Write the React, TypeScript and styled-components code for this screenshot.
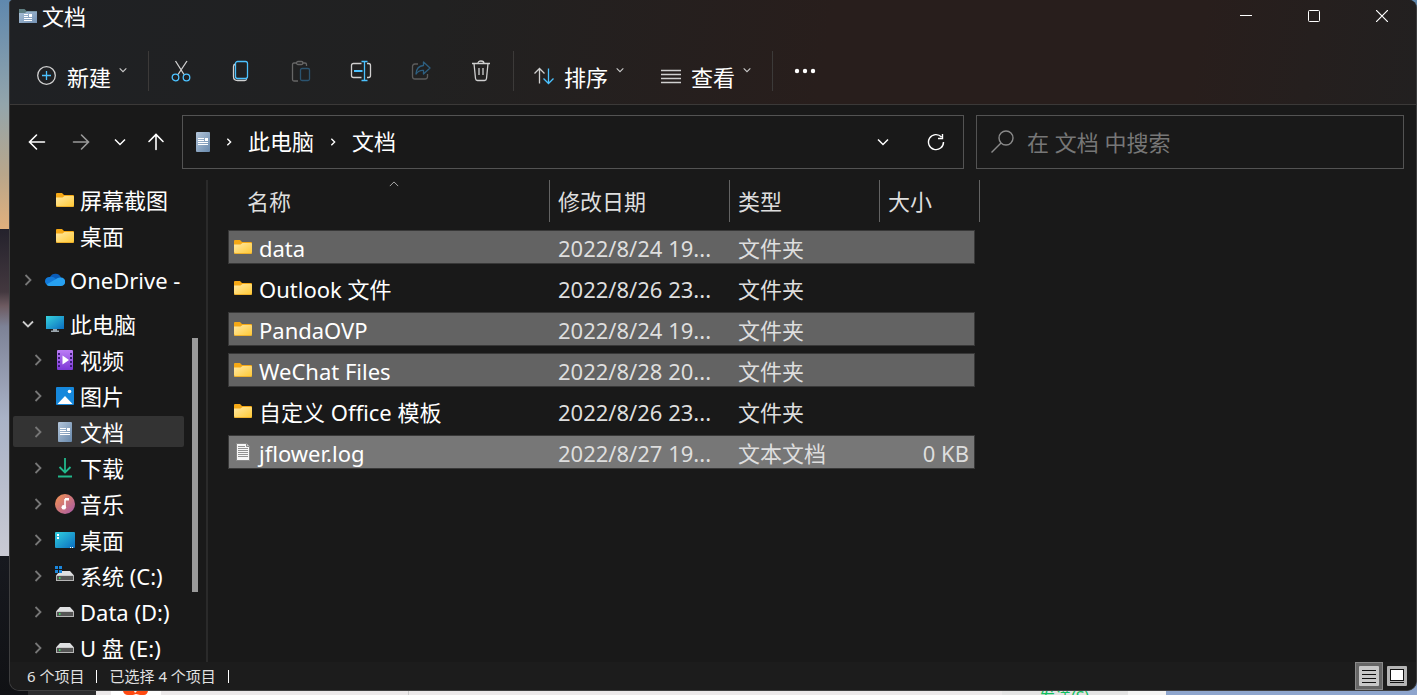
import React from "react";
import styled, { createGlobalStyle, css } from "styled-components";

const GlobalStyle = createGlobalStyle`
  * { box-sizing: border-box; }
  body {
    margin: 0;
    background: #101114;
    font-family: "Noto Sans", "Noto Sans CJK SC", sans-serif;
    font-size: 22px;
    line-height: 30px;
    color: #fff;
  }
  button {
    border: 0;
    padding: 0;
    background: none;
    color: inherit;
    font: inherit;
  }
  svg { display: block; flex: none; }
`;

const Desktop = styled.div`
  display: flex;
  flex-direction: column;
  height: 100vh;
  overflow: hidden;
  background:
    linear-gradient(#7f9bc6, #8fa6cc) right bottom / 20px 30px no-repeat,
    linear-gradient(
      #5f88ae 0%, #93a5ab 15%, #b8a68b 25%, #e2b07c 33%, #24222c 33%,
      #43383f 42%, #6d5a60 44%, #7d8296 47%, #a9b2c6 60%, #c9cad4 80%,
      #17191f 80%, #101114 100%
    );
`;

const Window = styled.main`
  flex: 1;
  min-height: 0;
  display: flex;
  flex-direction: column;
  margin-left: 9px;
  border: 1px solid #3e3e3f;
  border-top: 0;
  border-radius: 4px 8px 10px 10px;
  overflow: hidden;
  background: #191919;
`;

const Chrome = styled.header`
  border-bottom: 1px solid #3b3938;
  background: linear-gradient(100deg, #1f2124 0%, #212121 30%, #281e1c 58%, #281e1c 84%, #222020 100%);
`;

const TitleBar = styled.div`
  display: flex;
  align-items: center;
  height: 34px;
  padding: 0 0 2px 9px;
`;

const Title = styled.h1`
  flex: 1;
  margin: 0 0 0 5px;
  font-size: 22px;
  font-weight: 400;
`;

const CaptionButton = styled.button`
  display: grid;
  place-items: center;
  width: 68px;
  height: 32px;
`;

const Toolbar = styled.div`
  display: flex;
  align-items: center;
  height: 70px;
  padding: 4px 0 0 9px;
`;

const IconButton = styled.button`
  display: grid;
  place-items: center;
  width: 60px;
  height: 40px;
`;

const MenuButton = styled.button`
  display: flex;
  align-items: center;
  height: 48px;
  padding: 10px 19px 0 18px;
`;

const MenuLabel = styled.span`
  margin: 1px 8px 0 10px;
`;

const MenuCaret = styled.span`
  padding-bottom: 12px;
`;

const Divider = styled.span`
  width: 1px;
  height: 40px;
  margin: 0 2px;
  background: #3c3a39;
`;

const NavBar = styled.div`
  display: flex;
  align-items: center;
  height: 75px;
  padding: 0 12px 2px 5px;
`;

const NavButton = styled.button<{ $width: number }>`
  display: grid;
  place-items: center;
  width: ${(p) => p.$width}px;
  height: 40px;
`;

const fieldBox = css`
  display: flex;
  align-items: center;
  height: 54px;
  border: 1px solid #535353;
`;

const AddressBar = styled.nav`
  ${fieldBox}
  flex: 1;
  min-width: 0;
  margin: 0 12px 0 8px;
  padding-left: 13px;
`;

const Crumb = styled.a`
  padding-bottom: 2px;
  color: #fff;
  text-decoration: none;
  white-space: nowrap;
`;

const CrumbArrow = styled.span`
  display: grid;
  place-items: center;
  width: 38px;
`;

const Spacer = styled.span`
  flex: 1;
`;

const SearchBox = styled.form`
  ${fieldBox}
  width: 428px;
  padding-left: 14px;
`;

const SearchInput = styled.input`
  flex: 1;
  min-width: 0;
  margin-left: 13px;
  padding: 0;
  border: 0;
  outline: 0;
  background: transparent;
  color: #fff;
  font: inherit;
  &::placeholder { color: #777; opacity: 1; }
`;

const Body = styled.div`
  flex: 1;
  min-height: 0;
  display: flex;
`;

const Sidebar = styled.aside`
  display: flex;
  width: 198px;
  padding-left: 3px;
  border-right: 2px solid #2a2a2a;
  overflow: hidden;
`;

const Tree = styled.ul`
  width: 171px;
  margin: 0;
  padding: 2px 0 0;
  list-style: none;
  overflow: hidden;
`;

const TreeItem = styled.li<{ $spaced?: boolean }>`
  height: 36px;
  padding: 2px 0 3px;
  margin-top: ${(p) => (p.$spaced ? 8 : 0)}px;
`;

const TreeLink = styled.a<{ $level: number; $selected?: boolean }>`
  display: flex;
  align-items: center;
  height: 31px;
  padding-left: ${(p) => (p.$level === 2 ? 19 : 9)}px;
  border-radius: 2px;
  background: ${(p) => (p.$selected ? "#333" : "transparent")};
  color: #fff;
  text-decoration: none;
  white-space: nowrap;
`;

const TreeArrow = styled.span`
  display: grid;
  place-items: center;
  width: 12px;
`;

const TreeIcon = styled.span`
  display: grid;
  place-items: center;
  width: 20px;
  margin: 0 5px 0 11px;
`;

const ScrollTrack = styled.div`
  display: flex;
  flex-direction: column;
  width: 6px;
  margin-left: 8px;
  &::before { content: ""; flex: 158; }
  &::after { content: ""; flex: 70; }
`;

const ScrollThumb = styled.div`
  flex: 254;
  background: #9a9a9a;
`;

const Files = styled.section`
  flex: 1;
  min-width: 0;
  padding-left: 20px;
`;

const FileTable = styled.table`
  display: block;
  thead, tbody { display: block; }
`;

const HeadRow = styled.tr`
  display: grid;
  grid-template-columns: 322px 180px 150px 100px;
  margin-bottom: 8px;
`;

const HeadCell = styled.th`
  position: relative;
  height: 42px;
  padding: 6px 0 0 8px;
  border-right: 1px solid #636363;
  color: #dedede;
  font-weight: 400;
  text-align: left;
  &:first-child { padding-left: 19px; }
`;

const SortMark = styled.span`
  position: absolute;
  top: -1px;
  left: 50%;
`;

const FileRow = styled.tr<{ $state?: "selected" | "focused" }>`
  display: grid;
  grid-template-columns: 322px 180px 150px 93px;
  width: 747px;
  height: 34px;
  margin-bottom: 7px;
  border: 1px solid ${(p) => (p.$state ? "#383838" : "transparent")};
  background: ${(p) => (p.$state === "focused" ? "#777" : p.$state ? "#636363" : "transparent")};
`;

const Cell = styled.td<{ $end?: boolean }>`
  padding: ${(p) => (p.$end ? "2px 5px 0 0" : "2px 12px 0 7px")};
  color: #dedede;
  text-align: ${(p) => (p.$end ? "right" : "left")};
  overflow: hidden;
  white-space: nowrap;
`;

const NameCell = styled.td`
  display: flex;
  align-items: center;
  gap: 6px;
  padding: 2px 0 0 4px;
  white-space: nowrap;
`;

const FileIcon = styled.span`
  display: grid;
  place-items: center;
  width: 20px;
  padding-bottom: 2px;
`;

const StatusBar = styled.footer`
  display: flex;
  align-items: center;
  height: 28px;
  padding: 0 5px 0 17px;
  background: #1c1c1c;
  color: #e2e2e2;
  font-size: 15px;
  line-height: 20px;
`;

const StatusMark = styled.span`
  width: 1px;
  height: 13px;
  margin: 0 12px;
  background: #fff;
`;

const ViewButton = styled.button<{ $active?: boolean }>`
  display: grid;
  place-items: center;
  width: 28px;
  height: 28px;
  border: 1px solid ${(p) => (p.$active ? "#8a8a8a" : "transparent")};
  background: ${(p) => (p.$active ? "#666" : "transparent")};
`;

const Behind = styled.div`
  display: flex;
  height: 4px;
  overflow: hidden;
`;

const Strip = styled.div<{ $color: string; $width?: number }>`
  flex: ${(p) => (p.$width ? `0 0 ${p.$width}px` : "1")};
  background: ${(p) => p.$color};
  color: #10c060;
  font-size: 16px;
  line-height: 12px;
`;

const SendLabel = styled.span`
  display: block;
  padding-left: 37px;
`;

/* Icons */

type Dir = "right" | "down" | "up" | "left";
const turn: Record<Dir, number> = { right: 0, down: 90, left: 180, up: 270 };

const Chevron = ({ dir = "right", size = 12, color = "#fff", width = 1.5 }: { dir?: Dir; size?: number; color?: string; width?: number }) => (
  <svg width={size} height={size} viewBox="0 0 12 12" fill="none" stroke={color} strokeWidth={width}>
    <path d="M3.5 1 8.5 6l-5 5" transform={`rotate(${turn[dir]} 6 6)`} />
  </svg>
);

const Arrow = ({ dir, color = "#fff" }: { dir: Dir; color?: string }) => (
  <svg width="18" height="18" viewBox="0 0 18 18" fill="none" stroke={color} strokeWidth="1.6" strokeLinecap="round">
    <path d="M1.5 9h15M9.5 2l7 7-7 7" transform={`rotate(${turn[dir]} 9 9)`} />
  </svg>
);

const FolderIcon = () => (
  <svg width="18" height="14" viewBox="0 0 18 14">
    <defs>
      <linearGradient id="folder" x1="0" y1="0" x2="1" y2="1">
        <stop offset="0" stopColor="#ffe9a6" />
        <stop offset="1" stopColor="#ffc935" />
      </linearGradient>
    </defs>
    <path d="M0 1q0-1 1-1h5l2 2h9q1 0 1 1v9H0z" fill="#f5a815" />
    <path d="M0 4.5h6.5L8.500 3H17q1 0 1 1v8.500q0 1-1 1H1q-1 0-1-1z" fill="url(#folder)" />
    <path d="M0 12.500q0 1 1 1h16q1 0 1-1" fill="none" stroke="#eeb02c" />
  </svg>
);

const DocFolderIcon = () => (
  <svg width="18" height="14" viewBox="0 0 18 14">
    <defs>
      <linearGradient id="docfolder" x1="0" y1="0" x2="1" y2="1">
        <stop offset="0" stopColor="#a9c0d6" />
        <stop offset="1" stopColor="#7391b3" />
      </linearGradient>
    </defs>
    <path d="M0 0h5.500l2 2H18v5H0z" fill="#5f7f83" />
    <path d="M0 4h6l2-1.500h10V14H0z" fill="url(#docfolder)" />
    <path d="M5 5.500h4M5 7.500h4M5 9.500h8M5 11.500h8" stroke="#fff" />
    <path d="M10 5h3v3h-3z" fill="#fff" />
  </svg>
);

const DocIcon = () => (
  <svg width="14" height="20" viewBox="0 0 14 20">
    <defs>
      <linearGradient id="doc" x1="0" y1="0" x2="1" y2="1">
        <stop offset="0" stopColor="#b4c6da" />
        <stop offset="1" stopColor="#6788ab" />
      </linearGradient>
    </defs>
    <rect width="14" height="20" rx="1" fill="url(#doc)" />
    <path d="M2 6.500h6M2 8.500h6M2 10.500h10M2 12.500h10" stroke="#fff" />
    <path d="M9 6h3v3H9z" fill="#fff" />
  </svg>
);

const TextFileIcon = () => (
  <svg width="14" height="18" viewBox="0 0 14 18">
    <path d="M.5.500h10l3 3v14H.500z" fill="#f7f7f7" stroke="#888" />
    <path d="M10.500.500v3h3" fill="#ccc" stroke="#888" />
    <path d="M2 3.500h7M2 5.500h10M2 7.500h10M2 9.500h10M2 11.500h10M2 13.500h10" stroke="#777" strokeWidth=".8" />
  </svg>
);

const CloudIcon = () => (
  <svg width="20" height="13" viewBox="0 0 20 13">
    <path d="M5 4a6 6 0 0 1 11 .5L12 9 3 8z" fill="#0a5cb8" />
    <path d="M4.500 4Q8 3 11 6l-6 6.500H4A4.200 4.200 0 0 1 4.500 4z" fill="#1279d8" />
    <path d="M11 6q2-2 5-1.500a4 4 0 0 1 0 8.500H4.500q-2 0-3-1.500z" fill="#27a0f0" />
  </svg>
);

const MonitorIcon = () => (
  <svg width="18" height="16" viewBox="0 0 18 16">
    <defs>
      <linearGradient id="screen" x1="0" y1="0" x2="1" y2="1">
        <stop offset="0" stopColor="#37d3dd" />
        <stop offset="1" stopColor="#0a6cc0" />
      </linearGradient>
    </defs>
    <rect width="18" height="13" fill="url(#screen)" />
    <path d="M7 13h4v1.500h2V16H5v-1.500h2z" fill="#9aa5ad" />
  </svg>
);

const VideoIcon = () => (
  <svg width="16" height="20" viewBox="0 0 16 20">
    <defs>
      <linearGradient id="video" x1="0" y1="0" x2="0" y2="1">
        <stop offset="0" stopColor="#bb7cf5" />
        <stop offset="1" stopColor="#7d38d6" />
      </linearGradient>
    </defs>
    <rect width="16" height="20" rx="1" fill="url(#video)" />
    <path d="M2 3v15M14 3v15" stroke="#3d1c78" strokeWidth="2" strokeDasharray="2 2" />
    <path d="M5.500 5.500 12 10l-6.500 4.500z" fill="#fff" />
  </svg>
);

const PictureIcon = () => (
  <svg width="18" height="18" viewBox="0 0 18 18">
    <rect width="18" height="18" rx="1" fill="#1688dc" />
    <path d="M1.500 17 9 9l7.500 8z" fill="#fff" />
    <circle cx="13.500" cy="4.500" r="1.800" fill="#fff" />
  </svg>
);

const DownloadIcon = () => (
  <svg width="16" height="20" viewBox="0 0 16 20" fill="none" stroke="#22b88c" strokeWidth="1.800">
    <path d="M8 0v14M2.500 9 8 14.500 13.500 9M1 18.500h14" />
  </svg>
);

const MusicIcon = () => (
  <svg width="20" height="20" viewBox="0 0 20 20">
    <defs>
      <linearGradient id="music" x1="0" y1="0" x2="1" y2="1">
        <stop offset="0" stopColor="#f5944f" />
        <stop offset="1" stopColor="#a557a8" />
      </linearGradient>
    </defs>
    <circle cx="10" cy="10" r="10" fill="url(#music)" />
    <path d="M10 5v8" stroke="#fff" strokeWidth="1.600" />
    <path d="M10 4h4v2.500h-4z" fill="#fff" />
    <circle cx="8.800" cy="13.200" r="2.300" fill="#fff" />
  </svg>
);

const DesktopIcon = () => (
  <svg width="20" height="16" viewBox="0 0 20 16">
    <defs>
      <linearGradient id="desk" x1="0" y1="0" x2="1" y2="1">
        <stop offset="0" stopColor="#30cfdf" />
        <stop offset="1" stopColor="#0b6dbf" />
      </linearGradient>
    </defs>
    <rect width="20" height="16" rx="1" fill="url(#desk)" />
    <path d="M2 2h2v2H2zM2 5h2v2H2zM15 15h1v1h-1zM17 15h1v1h-1z" fill="#fff" />
  </svg>
);

const DriveIcon = ({ system }: { system?: boolean }) => (
  <svg width="20" height="20" viewBox="0 -2 20 20">
    <path d="M5 3h10l4 4.500V13H1V7.500z" fill="#dfe0e2" />
    <path d="M1 7.500h18V13H1z" fill="#b5b5b5" />
    <path d="M2 8h16v4H2z" fill="#555" />
    <path d="M4 9h1.500v2H4z" fill="#3fd060" />
    {system && <path d="M0-2h7v7H0z" fill="#191919" />}
    {system && <path d="M0-2h3v3H0zM4-2h3v3H4zM0 2h3v3H0zM4 2h3v3H4z" fill="#1a86dc" />}
  </svg>
);

const BLUE = "#4cc2ff";
const GREY = "#d0d0d0";

const stroke = { fill: "none", strokeWidth: 1.3 } as const;

const PlusIcon = () => (
  <svg width="20" height="20" viewBox="0 0 20 20" {...stroke}>
    <circle cx="9.500" cy="9.500" r="8.800" stroke={GREY} />
    <path d="M9.500 5v9M5 9.500h9" stroke={BLUE} />
  </svg>
);

const CutIcon = () => (
  <svg width="20" height="22" viewBox="0 0 20 22" {...stroke}>
    <path d="M4.500 1 13 14.500M16 1 7 14.500" stroke={GREY} />
    <circle cx="4.500" cy="17.500" r="3.300" stroke={BLUE} />
    <circle cx="15.500" cy="17.500" r="3.300" stroke={BLUE} />
  </svg>
);

const CopyIcon = () => (
  <svg width="20" height="22" viewBox="0 0 20 22" {...stroke}>
    <path d="M4.500 4Q2.500 4.500 2.500 6.500v10Q2.500 20.500 6.500 20.500h7q1.500 0 2.200-1.300" stroke={GREY} />
    <rect x="4.500" y="1.500" width="12" height="17" rx="2" stroke={BLUE} />
  </svg>
);

const PasteIcon = () => (
  <svg width="20" height="22" viewBox="0 0 20 22" {...stroke}>
    <path d="M6 3H3Q1.500 3 1.500 4.500v15q0 1.500 1.500 1.500h4M11 3h3q1.500 0 1.500 1.500V6" stroke="#666" />
    <rect x="5.500" y="1.500" width="6.500" height="3" rx="1.500" stroke="#666" />
    <rect x="9.500" y="8.500" width="9" height="12" rx="1.500" stroke="#2b5470" />
  </svg>
);

const RenameIcon = () => (
  <svg width="22" height="22" viewBox="0 0 22 22" {...stroke}>
    <path d="M11.500 3.500H3.500q-2 0-2 2v10q0 2 2 2h8M17 3.500h1.500q2 0 2 2v10q0 2-2 2H17" stroke={GREY} />
    <path d="M14.500 1.500v19M11.500 1.500h6M11.500 20.500h6" stroke={BLUE} />
    <path d="M4 11h8.500" stroke={BLUE} strokeWidth="2" />
  </svg>
);

const ShareIcon = () => (
  <svg width="20" height="22" viewBox="0 0 20 22" {...stroke}>
    <path d="M7 4H4Q1.500 4 1.500 6.500v10Q1.500 19 4 19h10q2.500 0 2.500-2.500V14" stroke="#5c5c5c" />
    <path d="M12.500 2 19 8l-6.500 6v-3.500Q8 10 5 14q.5-8 7.500-8.500z" stroke="#2d5f80" strokeLinejoin="round" />
  </svg>
);

const TrashIcon = () => (
  <svg width="20" height="22" viewBox="0 0 20 22" {...stroke} stroke={GREY}>
    <path d="M1 3.500h18M3 3.500l1.500 15q.2 2 2 2h7q1.800 0 2-2l1.500-15M7 3.500Q7 1 10 1t3 2.500M8 8v7M12 8v7" />
  </svg>
);

const SortIcon = () => (
  <svg width="20" height="18" viewBox="0 0 20 18" {...stroke}>
    <path d="M5.500 16.500V1.500M.500 6.500l5-5 5 5" stroke={GREY} />
    <path d="M14.500 1.500v15M9.500 11.500l5 5 5-5" stroke={BLUE} />
  </svg>
);

const LinesIcon = () => (
  <svg width="20" height="16" viewBox="0 0 20 16" {...stroke} stroke={GREY}>
    <path d="M0 2.500h20M0 6.500h20M0 10.500h20M0 14.500h20" />
  </svg>
);

const MoreIcon = () => (
  <svg width="22" height="6" viewBox="0 0 22 6" fill="#fff">
    <circle cx="3" cy="3" r="2.200" />
    <circle cx="11" cy="3" r="2.200" />
    <circle cx="19" cy="3" r="2.200" />
  </svg>
);

const RefreshIcon = () => (
  <svg width="18" height="18" viewBox="0 0 18 18" fill="none" stroke="#fff" strokeWidth="1.400">
    <path d="M16.500 9A7.500 7.500 0 1 1 14.500 4M15.500 1v4.500H11" />
  </svg>
);

const SearchIcon = () => (
  <svg width="23" height="23" viewBox="0 0 23 23" fill="none" stroke="#8a8a8a" strokeWidth="1.400">
    <circle cx="15" cy="8" r="7" />
    <path d="M10 13 .500 22.500" />
  </svg>
);

const MinimizeIcon = () => (
  <svg width="12" height="12" viewBox="0 0 12 12" fill="none" stroke="#fff">
    <path d="M0 5.500h12" />
  </svg>
);

const MaximizeIcon = () => (
  <svg width="12" height="12" viewBox="0 0 12 12" fill="none" stroke="#fff">
    <rect x=".5" y=".5" width="11" height="11" rx="1" />
  </svg>
);

const CloseIcon = () => (
  <svg width="12" height="12" viewBox="0 0 12 12" fill="none" stroke="#fff" strokeWidth="1.200">
    <path d="M0 0l12 12M12 0 0 12" />
  </svg>
);

const DetailsIcon = () => (
  <svg width="20" height="20" viewBox="0 0 20 20">
    <rect width="20" height="20" rx="1" fill="#c8c8c8" />
    <path d="M3 4.500h14M3 8.500h14M3 12.500h14M3 16.500h14" stroke="#111" />
  </svg>
);

const TilesIcon = () => (
  <svg width="20" height="20" viewBox="0 0 20 20">
    <rect width="20" height="20" rx="1" fill="#b4b4b4" />
    <rect x="3.500" y="3.500" width="13" height="11" fill="#fff" stroke="#111" />
    <path d="M3 16.500h14" stroke="#111" />
  </svg>
);

const AppMark = () => (
  <svg width="313" height="4" viewBox="0 0 313 4">
    <path d="M15 0h50v4H15z" fill="#fff" />
    <path d="M27 0h11l1 2 2-2h11q-1 4-4 4h-4l-4-1-3 1h-5q-4 0-5-4z" fill="#ff4a12" />
    <path d="M312.500 0v4" stroke="#ccc" />
  </svg>
);

/* Data */

type Node = {
  label: string;
  icon: React.ReactNode;
  level: 1 | 2;
  arrow?: Dir;
  spaced?: boolean;
  selected?: boolean;
};

const tree: Node[] = [
  { label: "屏幕截图", icon: <FolderIcon />, level: 2 },
  { label: "桌面", icon: <FolderIcon />, level: 2 },
  { label: "OneDrive -", icon: <CloudIcon />, level: 1, arrow: "right", spaced: true },
  { label: "此电脑", icon: <MonitorIcon />, level: 1, arrow: "down", spaced: true },
  { label: "视频", icon: <VideoIcon />, level: 2, arrow: "right" },
  { label: "图片", icon: <PictureIcon />, level: 2, arrow: "right" },
  { label: "文档", icon: <DocIcon />, level: 2, arrow: "right", selected: true },
  { label: "下载", icon: <DownloadIcon />, level: 2, arrow: "right" },
  { label: "音乐", icon: <MusicIcon />, level: 2, arrow: "right" },
  { label: "桌面", icon: <DesktopIcon />, level: 2, arrow: "right" },
  { label: "系统 (C:)", icon: <DriveIcon system />, level: 2, arrow: "right" },
  { label: "Data (D:)", icon: <DriveIcon />, level: 2, arrow: "right" },
  { label: "U 盘 (E:)", icon: <DriveIcon />, level: 2, arrow: "right" },
];

type Entry = {
  name: string;
  date: string;
  type: string;
  size?: string;
  state?: "selected" | "focused";
};

const files: Entry[] = [
  { name: "data", date: "2022/8/24 19...", type: "文件夹", state: "selected" },
  { name: "Outlook 文件", date: "2022/8/26 23...", type: "文件夹" },
  { name: "PandaOVP", date: "2022/8/24 19...", type: "文件夹", state: "selected" },
  { name: "WeChat Files", date: "2022/8/28 20...", type: "文件夹", state: "selected" },
  { name: "自定义 Office 模板", date: "2022/8/26 23...", type: "文件夹" },
  { name: "jflower.log", date: "2022/8/27 19...", type: "文本文档", size: "0 KB", state: "focused" },
];

const actions = [
  { label: "剪切", icon: <CutIcon /> },
  { label: "复制", icon: <CopyIcon /> },
  { label: "粘贴", icon: <PasteIcon /> },
  { label: "重命名", icon: <RenameIcon /> },
  { label: "共享", icon: <ShareIcon /> },
  { label: "删除", icon: <TrashIcon /> },
];

const Menu = ({ icon, label }: { icon: React.ReactNode; label: string }) => (
  <MenuButton type="button">
    {icon}
    <MenuLabel>{label}</MenuLabel>
    <MenuCaret><Chevron dir="down" size={8} color="#ccc" width={1.6} /></MenuCaret>
  </MenuButton>
);

export default function App() {
  return (
    <Desktop>
      <GlobalStyle />
      <Window>
        <Chrome>
          <TitleBar>
            <DocFolderIcon />
            <Title>文档</Title>
            <CaptionButton type="button" aria-label="最小化"><MinimizeIcon /></CaptionButton>
            <CaptionButton type="button" aria-label="最大化"><MaximizeIcon /></CaptionButton>
            <CaptionButton type="button" aria-label="关闭"><CloseIcon /></CaptionButton>
          </TitleBar>
          <Toolbar>
            <Menu icon={<PlusIcon />} label="新建" />
            <Divider />
            {actions.map((a) => (
              <IconButton key={a.label} type="button" aria-label={a.label}>{a.icon}</IconButton>
            ))}
            <Divider />
            <Menu icon={<SortIcon />} label="排序" />
            <Menu icon={<LinesIcon />} label="查看" />
            <Divider />
            <IconButton type="button" aria-label="更多"><MoreIcon /></IconButton>
          </Toolbar>
        </Chrome>

        <NavBar>
          <NavButton type="button" $width={44} aria-label="后退"><Arrow dir="left" /></NavButton>
          <NavButton type="button" $width={44} aria-label="前进"><Arrow dir="right" color="#999" /></NavButton>
          <NavButton type="button" $width={34} aria-label="最近位置"><Chevron dir="down" /></NavButton>
          <NavButton type="button" $width={37} aria-label="上移"><Arrow dir="up" /></NavButton>
          <AddressBar aria-label="地址">
            <DocIcon />
            <CrumbArrow><Chevron size={8} width={2} /></CrumbArrow>
            <Crumb href="#pc">此电脑</Crumb>
            <CrumbArrow><Chevron size={8} width={2} /></CrumbArrow>
            <Crumb href="#documents">文档</Crumb>
            <Spacer />
            <NavButton type="button" $width={53} aria-label="展开"><Chevron dir="down" /></NavButton>
            <NavButton type="button" $width={54} aria-label="刷新"><RefreshIcon /></NavButton>
          </AddressBar>
          <SearchBox role="search" onSubmit={(e) => e.preventDefault()}>
            <SearchIcon />
            <SearchInput type="text" aria-label="搜索" placeholder="在 文档 中搜索" />
          </SearchBox>
        </NavBar>

        <Body>
          <Sidebar>
            <Tree>
              {tree.map((n, i) => (
                <TreeItem key={i} $spaced={n.spaced}>
                  <TreeLink href="#" $level={n.level} $selected={n.selected}>
                    <TreeArrow>
                      {n.arrow && <Chevron dir={n.arrow} color={n.arrow === "down" ? "#ccc" : "#777"} width={1.8} />}
                    </TreeArrow>
                    <TreeIcon>{n.icon}</TreeIcon>
                    {n.label}
                  </TreeLink>
                </TreeItem>
              ))}
            </Tree>
            <ScrollTrack><ScrollThumb /></ScrollTrack>
          </Sidebar>
          <Files>
            <FileTable>
              <thead>
                <HeadRow>
                  <HeadCell scope="col">
                    名称
                    <SortMark><Chevron dir="up" size={10} color="#aaa" width={1.2} /></SortMark>
                  </HeadCell>
                  <HeadCell scope="col">修改日期</HeadCell>
                  <HeadCell scope="col">类型</HeadCell>
                  <HeadCell scope="col">大小</HeadCell>
                </HeadRow>
              </thead>
              <tbody>
                {files.map((f) => (
                  <FileRow key={f.name} $state={f.state}>
                    <NameCell>
                      <FileIcon>{f.size ? <TextFileIcon /> : <FolderIcon />}</FileIcon>
                      {f.name}
                    </NameCell>
                    <Cell>{f.date}</Cell>
                    <Cell>{f.type}</Cell>
                    <Cell $end>{f.size}</Cell>
                  </FileRow>
                ))}
              </tbody>
            </FileTable>
          </Files>
        </Body>

        <StatusBar>
          <span>6 个项目</span>
          <StatusMark />
          <span>已选择 4 个项目</span>
          <StatusMark />
          <Spacer />
          <ViewButton type="button" $active aria-label="详细信息"><DetailsIcon /></ViewButton>
          <ViewButton type="button" aria-label="大缩略图"><TilesIcon /></ViewButton>
        </StatusBar>
      </Window>
      <Behind>
        <Strip $color="#111216" $width={28} />
        <Strip $color="#2c2c2e" $width={68} />
        <Strip $color="#ece9ea"><AppMark /></Strip>
        <Strip $color="#e4e4e4" $width={126}><SendLabel>发送(S)</SendLabel></Strip>
        <Strip $color="#f4f4f4" $width={38} />
        <Strip $color="#8ea5cd" $width={251} />
      </Behind>
    </Desktop>
  );
}
